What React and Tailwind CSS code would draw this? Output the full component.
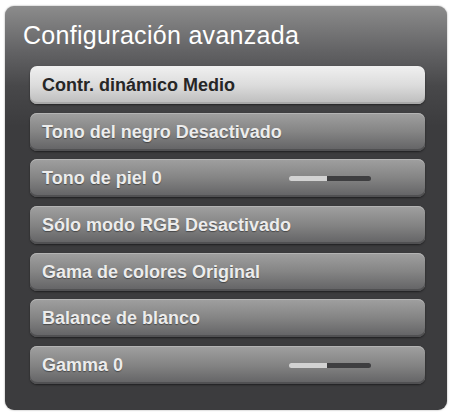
const items = [
  { label: 'Contr. dinámico Medio', selected: true },
  { label: 'Tono del negro Desactivado' },
  { label: 'Tono de piel 0', slider: true },
  { label: 'Sólo modo RGB Desactivado' },
  { label: 'Gama de colores Original' },
  { label: 'Balance de blanco' },
  { label: 'Gamma 0', slider: true },
];

function Slider() {
  return (
    <div className="mr-[54px] flex h-[5px] w-[82px] overflow-hidden rounded-full">
      <div className="h-full w-[38px] bg-[#d2d2d2]" />
      <div className="h-full flex-1 bg-[#3e3e40]" />
    </div>
  );
}

function Row({ label, selected, slider }) {
  const base =
    'flex h-[38px] items-center justify-between rounded-[7px] pl-[12px] text-[18px] font-bold leading-none';
  const look = selected
    ? 'bg-gradient-to-b from-[#f0f0f0] via-[#dcdcdc] to-[#bcbcbc] text-[#262626] shadow-[inset_0_-2px_0_#a8a8a8,0_1px_2px_rgba(0,0,0,0.5)]'
    : 'bg-gradient-to-b from-[#a0a0a0] via-[#848484] to-[#626264] text-[#ececec] shadow-[inset_0_1px_0_#b4b4b4,inset_0_-2px_0_#505052,0_1px_2px_rgba(0,0,0,0.5)] [text-shadow:0_1px_1px_rgba(0,0,0,0.4)]';
  return (
    <div className={`${base} ${look}`}>
      <span>{label}</span>
      {slider ? <Slider /> : null}
    </div>
  );
}

export default function App() {
  return (
    <div className="h-[415px] w-[451px] bg-white pl-[5px] pr-[4px] pt-[6px] font-['Liberation_Sans',Arial,sans-serif]">
      <div className="h-[404px] overflow-hidden rounded-[9px] bg-[#3c3c3e] bg-[linear-gradient(to_bottom,#8c8c8c_0px,#636365_45px,#48484a_80px,#3c3c3e_120px,#3c3c3e_100%)] shadow-[0_0_2px_rgba(0,0,0,0.4)]">
        <div className="px-[18px] pb-[17px] pt-[17px]">
          <h1 className="text-[25px] leading-none tracking-[0.3px] text-white">Configuración avanzada</h1>
        </div>
        <div className="mt-[1px] flex flex-col gap-[8.7px] pl-[25px] pr-[22px]">
          {items.map((item) => (
            <Row key={item.label} {...item} />
          ))}
        </div>
      </div>
    </div>
  );
}
